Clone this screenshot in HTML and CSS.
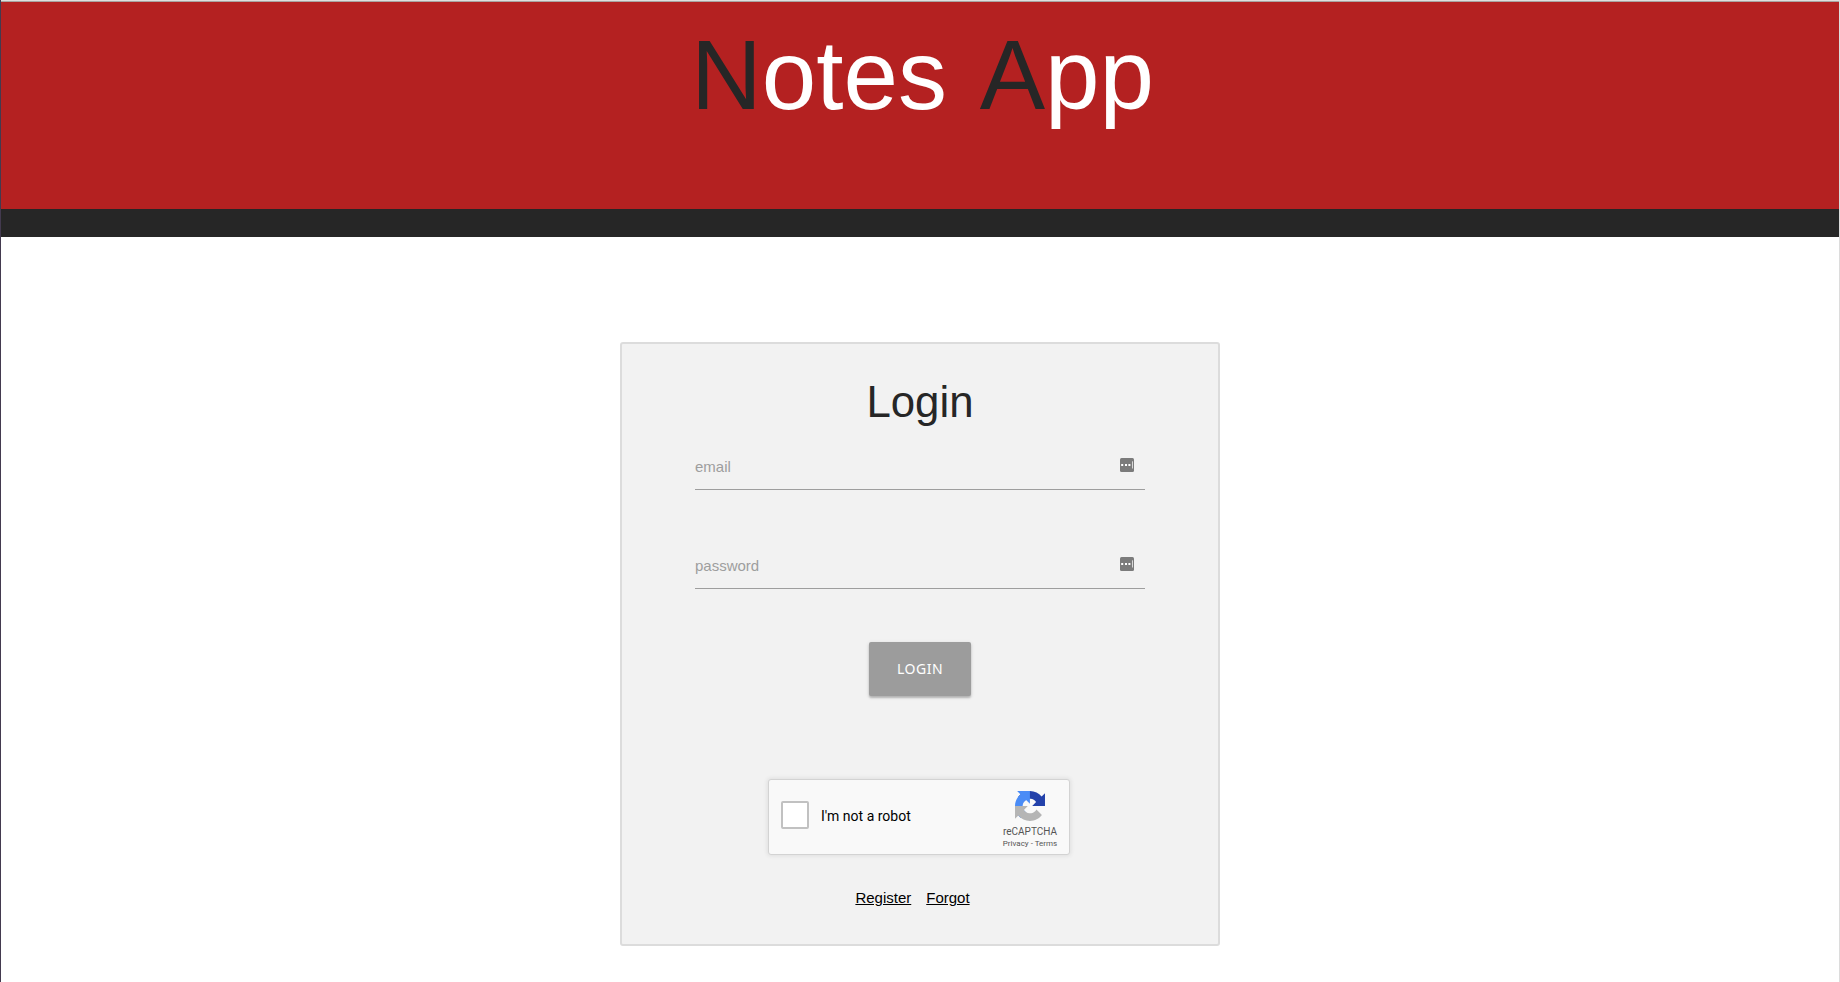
FILE: index.html
```
<!DOCTYPE html>
<html lang="en">
<head>
<meta charset="utf-8">
<title>Notes App</title>
<link rel="stylesheet" href="styles.css">
</head>
<body>
<div class="page">
  <header class="header">
    <h1 class="title"><span class="initial">N</span>otes <span class="initial">A</span>pp</h1>
  </header>
  <div class="bar"></div>
  <main class="main">
    <form class="card">
      <h2 class="heading">Login</h2>
      <label class="field">
        <span>email</span>
        <svg class="key" width="14" height="14" viewBox="0 0 14 14"><rect width="14" height="14" rx="1.5" fill="#7b7b7b"/><path d="M1.2 6h2v2h-2zM5 6h2v2H5zM8.4 6h2v2h-2z" fill="#fff"/><path d="M12.5 3.3v7.2" stroke="#d8d8d8"/></svg>
      </label>
      <label class="field">
        <span>password</span>
        <svg class="key" width="14" height="14" viewBox="0 0 14 14"><rect width="14" height="14" rx="1.5" fill="#7b7b7b"/><path d="M1.2 6h2v2h-2zM5 6h2v2H5zM8.4 6h2v2h-2z" fill="#fff"/><path d="M12.5 3.3v7.2" stroke="#d8d8d8"/></svg>
      </label>
      <button class="submit" type="button">LOGIN</button>
      <div class="captcha">
        <span class="checkbox"></span>
        <span class="captcha-label">I'm not a robot</span>
        <div class="brand">
          <svg width="30" height="30" viewBox="0 0 64 64">
            <path fill="#2341aa" d="M64 31.955l-.033-1.37V4.687l-7.16 7.16C50.948 4.674 42.033.093 32.05.093c-10.4 0-19.622 4.96-25.458 12.64l11.736 11.86a15.55 15.55 0 0 1 4.754-5.334c2.05-1.6 4.952-2.906 8.968-2.906.485 0 .86.057 1.135.163 4.976.393 9.288 3.14 11.828 7.124l-8.307 8.307L64 31.953"/>
            <path fill="#4a8cf6" d="M31.862.094l-1.37.033H4.594l7.16 7.16C4.58 13.147 0 22.06 0 32.046c0 10.4 4.96 19.622 12.64 25.458L24.5 45.768a15.55 15.55 0 0 1-5.334-4.754c-1.6-2.05-2.906-4.952-2.906-8.968 0-.485.057-.86.163-1.135.393-4.976 3.14-9.288 7.124-11.828l8.307 8.307L31.86.095"/>
            <path fill="#b5b5b5" d="M.001 32.045l.033 1.37v25.898l7.16-7.16c5.86 7.173 14.774 11.754 24.76 11.754 10.4 0 19.622-4.96 25.458-12.64l-11.736-11.86a15.55 15.55 0 0 1-4.754 5.334c-2.05 1.6-4.952 2.906-8.968 2.906-.485 0-.86-.057-1.135-.163-4.976-.393-9.288-3.14-11.828-7.124l8.307-8.307c-10.522.04-22.4.066-27.295-.005"/>
          </svg>
          <span class="brand-name">reCAPTCHA</span>
          <span class="brand-links">Privacy - Terms</span>
        </div>
      </div>
      <nav class="links"><a href="#">Register</a><a href="#">Forgot</a></nav>
    </form>
  </main>
</div>
</body>
</html>
```
FILE: styles.css
```
* { box-sizing: border-box; }
body {
  margin: 0;
  overflow: hidden;
  font-family: "Liberation Sans", Arial, sans-serif;
  font-size: 15px;
  color: #262626;
}
.page {
  height: 982px;
  border-left: 1px solid #433a4f;
  border-right: 1px solid #dcdcdc;
  background: #fff;
}
.header {
  height: 209px;
  border-top: 1px solid #e0dfde;
  background: #b42121;
  box-shadow: inset 0 1px #a9a5a2;
  text-align: center;
}
.title {
  margin: 0;
  padding: 17px 0 0 5px;
  font-size: 98px;
  font-weight: 400;
  line-height: 114px;
  word-spacing: 11px;
  color: #fff;
}
.initial { color: #262626; }
.bar { height: 28px; background: #262626; }
.main { display: flex; justify-content: center; padding-top: 105px; }
.card {
  display: flex;
  flex-direction: column;
  align-items: center;
  width: 600px;
  height: 604px;
  padding-top: 33px;
  border: 2px solid #dcdcdc;
  border-radius: 3px;
  background: #f2f2f2;
}
.heading {
  margin: 0 0 -1px;
  font-size: 43.8px;
  font-weight: 400;
  line-height: 50px;
}
.field {
  display: flex;
  justify-content: space-between;
  width: 450px;
  height: 45px;
  margin-top: 19px;
  padding: 13px 11px 0 0;
  border-bottom: 1px solid #9e9e9e;
  line-height: 18px;
  color: #9e9e9e;
}
.field + .field { margin-top: 54px; }
.key { display: block; }
.submit {
  width: 102px;
  height: 54px;
  margin-top: 53px;
  padding: 0 0 2px;
  border: 0;
  border-radius: 2px;
  background: #9c9c9c;
  box-shadow: 0 2px 2px rgba(0, 0, 0, .2), 0 1px 4px rgba(0, 0, 0, .12);
  color: #fff;
  font: 14px "Noto Sans", sans-serif;
  letter-spacing: .5px;
}
.captcha {
  display: flex;
  align-items: center;
  width: 302px;
  height: 76px;
  margin: 83px 2px 0 0;
  padding-left: 12px;
  border: 1px solid #d3d3d3;
  border-radius: 3px;
  background: #f9f9f9;
  box-shadow: 0 0 4px 1px rgba(0, 0, 0, .08);
  font-family: Roboto, sans-serif;
}
.checkbox {
  width: 28px;
  height: 28px;
  margin-bottom: 4px;
  border: 2px solid #c1c1c1;
  border-radius: 2px;
  background: #fff;
}
.captcha-label { padding: 0 0 2px 12px; font-size: 14px; color: #000; }
.brand {
  display: flex;
  flex-direction: column;
  align-items: center;
  width: 78px;
  margin-left: auto;
  padding-top: 6px;
  color: #555;
}
.brand-name { margin-top: 4px; font-size: 10px; line-height: 13px; }
.brand-links { margin-top: 1px; font-size: 8px; line-height: 10px; }
.links {
  display: flex;
  gap: 15px;
  margin: 34px 15px 0 0;
  line-height: 18px;
}
.links a { color: #000; text-decoration: underline; }
```
